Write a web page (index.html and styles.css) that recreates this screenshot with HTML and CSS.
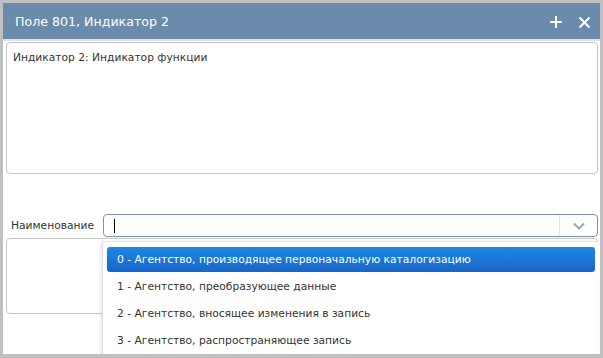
FILE: index.html
```html
<!DOCTYPE html>
<html lang="ru">
<head>
    <meta charset="UTF-8">
    <title>Поле 801, Индикатор 2</title>
    <link rel="stylesheet" href="styles.css">
</head>
<body>
    <div class="window">
        <div class="titlebar">
            <span class="title">Поле 801, Индикатор 2</span>
            <span class="tools">
                <svg width="14" height="14" viewBox="0 0 14 14"><path d="M7 1v12M1 7h12" stroke="#fff" stroke-width="2"/></svg>
                <svg width="13" height="13" viewBox="0 0 13 13"><path d="M1.5 1.5l10 10M11.5 1.5l-10 10" stroke="#fff" stroke-width="2"/></svg>
            </span>
        </div>
        <div class="content">
            <div class="memo">Индикатор 2: Индикатор функции</div>
            <div class="row">
                <label>Наименование</label>
                <div class="combo">
                    <span class="caret"></span>
                    <span class="arrow">
                        <svg width="12" height="8" viewBox="0 0 12 8"><path d="M1 1.5l5 5 5-5" stroke="#98a4b0" stroke-width="2" fill="none"/></svg>
                    </span>
                </div>
            </div>
            <div class="lower">
                <div class="memo small"></div>
                <ul class="list">
                    <li class="active">0 - Агентство, производящее первоначальную каталогизацию</li>
                    <li>1 - Агентство, преобразующее данные</li>
                    <li>2 - Агентство, вносящее изменения в запись</li>
                    <li>3 - Агентство, распространяющее запись</li>
                </ul>
            </div>
        </div>
    </div>
</body>
</html>
```

FILE: styles.css
```css
body {
    margin: 0;
    background-color: #c0c0c0;
    font-family: "DejaVu Sans", sans-serif;
    font-size: 10.7px;
    color: #333;
}

.window {
    margin: 3px 3px 0 3px;
    height: 351px;
    background-color: #fff;
    overflow: hidden;
}

.titlebar {
    height: 36px;
    background-color: #6a8bab;
    color: #fff;
    display: flex;
    align-items: center;
    justify-content: space-between;
    padding: 0 9px 0 12px;
    border-bottom: 2px solid #e2e2e2;
}

.title {
    font-size: 12.6px;
}

.tools {
    display: flex;
    align-items: center;
    gap: 15px;
    padding-top: 2px;
}

.content {
    padding: 1px 2px 0 3px;
}

.memo {
    border: 1px solid #c6c6c6;
    border-radius: 4px;
    padding: 8px 6px;
    box-sizing: border-box;
    height: 132px;
}

.row {
    display: flex;
    align-items: center;
    margin-top: 40px;
    height: 23px;
}

.row label {
    width: 92px;
    padding-left: 5px;
    color: #333;
}

.combo {
    flex: 1;
    height: 23px;
    box-sizing: border-box;
    border: 1px solid #7d93a9;
    border-radius: 4px;
    display: flex;
    align-items: center;
    justify-content: space-between;
}

.caret {
    width: 1px;
    height: 14px;
    background-color: #000;
    margin-left: 10px;
}

.arrow {
    width: 37px;
    height: 21px;
    border-left: 1px solid #e4e4e4;
    display: flex;
    align-items: center;
    justify-content: center;
}

.lower {
    position: relative;
    margin-top: 1px;
}

.memo.small {
    height: 76px;
}

.list {
    position: absolute;
    top: 3px;
    left: 96px;
    width: 496px;
    margin: 0;
    padding: 5px 3px 0 4px;
    list-style: none;
    background-color: #fff;
    border-left: 1px solid #e0e0e0;
    border-top: 1px solid #e8e8e8;
    box-sizing: border-box;
    box-shadow: -1px 1px 3px rgba(0, 0, 0, 0.12);
    height: 120px;
}

.list li {
    height: 27px;
    line-height: 26px;
    padding-left: 10px;
    color: #333;
    border-radius: 3px;
}

.list li.active {
    height: 25px;
    line-height: 25px;
    margin-bottom: 2px;
    background: linear-gradient(#1f87e3, #1766c9);
    color: #fff;
}
```
